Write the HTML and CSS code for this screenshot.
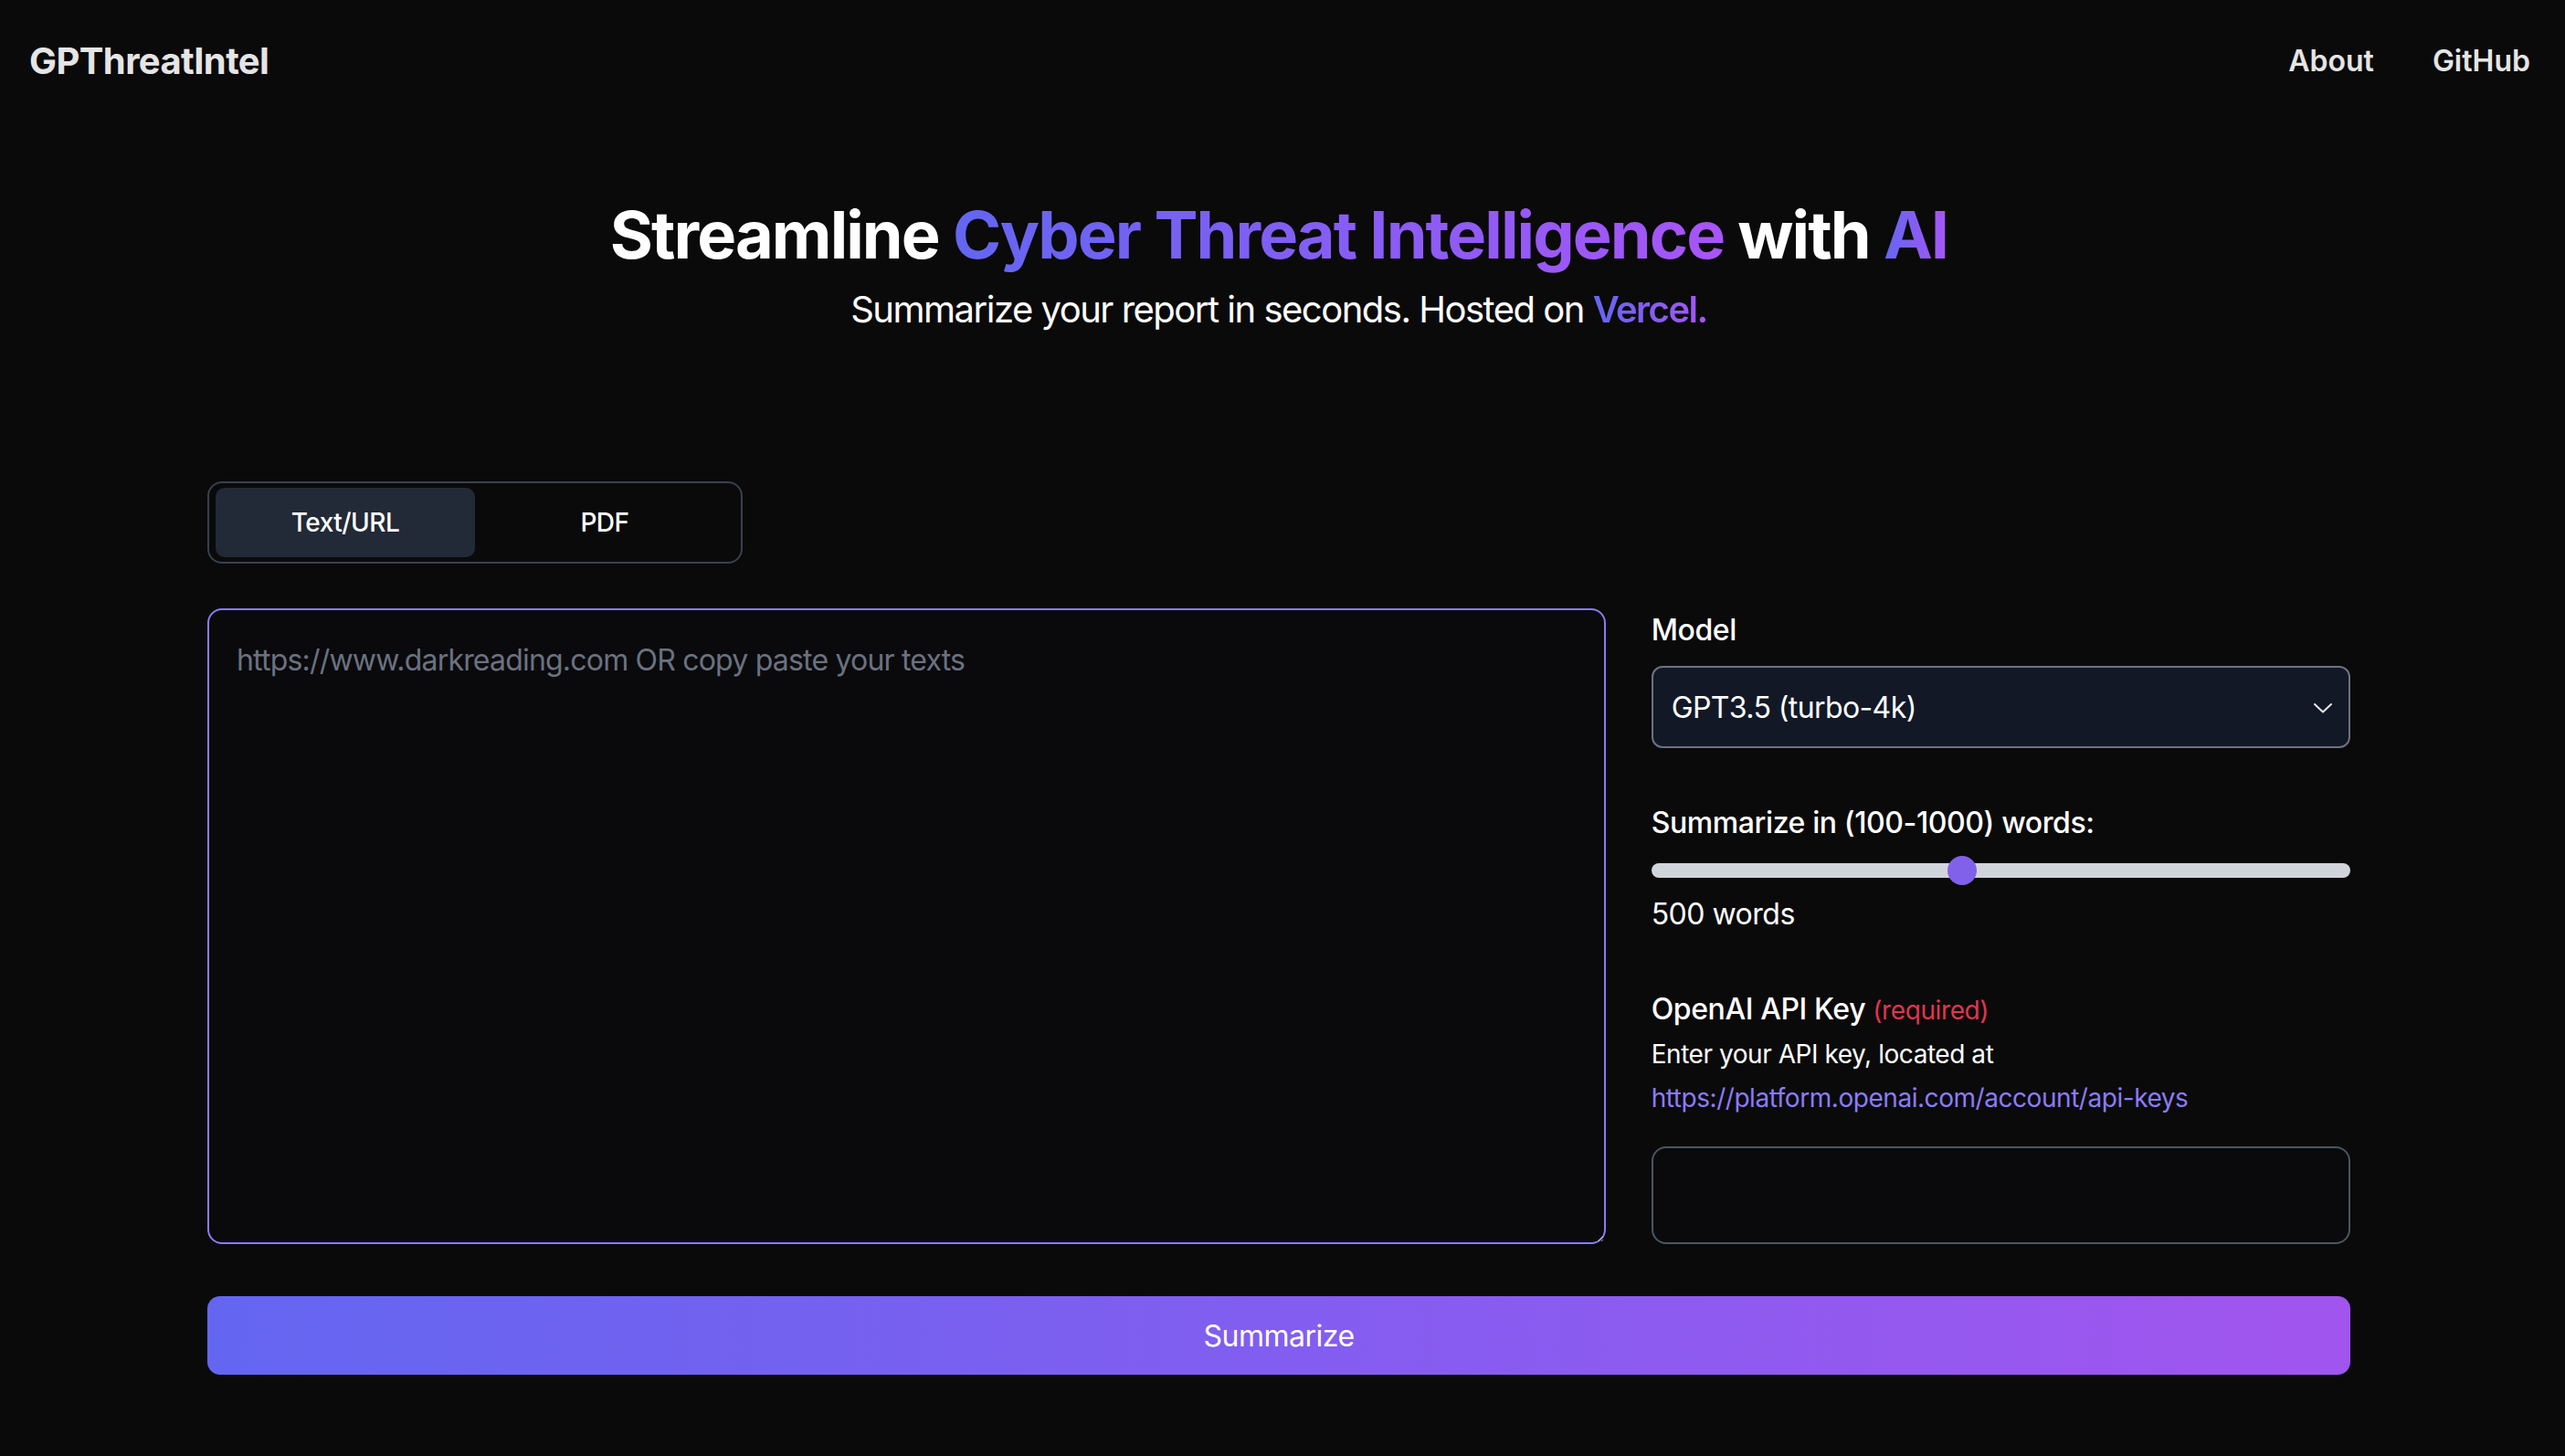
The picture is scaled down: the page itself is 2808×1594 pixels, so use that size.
FILE: index.html
```html
<!DOCTYPE html>
<html lang="en">
<head>
<meta charset="utf-8">
<title>GPThreatIntel</title>
<link rel="stylesheet" href="styles.css">
</head>
<body>
<header class="nav">
  <a class="brand" href="#">GPThreatIntel</a>
  <nav class="links">
    <a href="#">About</a>
    <a href="#">GitHub</a>
  </nav>
</header>
<main class="main">
  <section class="hero">
    <h1 class="title">Streamline <span class="grad">Cyber Threat Intelligence</span> with <span class="grad">AI</span></h1>
    <p class="subtitle">Summarize your report in seconds. Hosted on <span class="grad grad-sub">Vercel.</span></p>
  </section>
  <div class="container">
    <div class="tabs">
      <button class="tab active">Text/URL</button>
      <button class="tab">PDF</button>
    </div>
    <div class="grid">
      <textarea class="report" placeholder="https://www.darkreading.com OR copy paste your texts"></textarea>
      <aside class="side">
        <label class="label">Model</label>
        <div class="select">
          <span>GPT3.5 (turbo-4k)</span>
          <svg class="chev" width="22" height="14" viewBox="0 0 22 14"><path d="M2 3 L11 11.5 L20 3" fill="none" stroke="#e5e7eb" stroke-width="2" stroke-linecap="round" stroke-linejoin="round"/></svg>
        </div>
        <label class="label label-words">Summarize in (100-1000) words:</label>
        <div class="slider">
          <div class="track"></div>
          <div class="thumb" style="left: 44.44%"></div>
        </div>
        <p class="value">500 words</p>
        <label class="label label-key">OpenAI API Key <span class="req">(required)</span></label>
        <p class="hint">Enter your API key, located at</p>
        <a class="hint link" href="#">https://platform.openai.com/account/api-keys</a>
        <input class="key" type="password">
      </aside>
    </div>
    <button class="summarize">Summarize</button>
  </div>
</main>
</body>
</html>
```
FILE: styles.css
```css
* { box-sizing: border-box; }
html, body { margin: 0; padding: 0; }
body {
  background: #0a0a0a;
  color: #ffffff;
  font-family: Inter, "Noto Sans", "Liberation Sans", sans-serif;
  min-height: 1594px;
  padding-right: 8px;
}
a { text-decoration: none; color: inherit; }

.nav {
  height: 132px;
  display: flex;
  align-items: center;
  justify-content: space-between;
  padding: 0 30px 0 32px;
}
.brand {
  font-size: 40px;
  font-weight: 700;
  color: #e5e5e5;
  letter-spacing: -0.6px;
}
.links { display: flex; gap: 64px; }
.links a {
  font-size: 32px;
  font-weight: 600;
  color: #e5e5e5;
  letter-spacing: 0;
}

.hero {
  text-align: center;
  padding-top: 85px;
}
.title {
  margin: 0;
  font-size: 72px;
  line-height: 80px;
  font-weight: 700;
  letter-spacing: -1.9px;
}
.grad {
  background: linear-gradient(90deg, #6366f1, #a855f7);
  -webkit-background-clip: text;
  background-clip: text;
  color: transparent;
}
.subtitle {
  margin: 14px 0 0;
  font-size: 40px;
  line-height: 56px;
  font-weight: 400;
  letter-spacing: -1.5px;
}
.grad-sub { font-weight: 600; }

.container {
  width: 2346px;
  margin: 0 auto;
  padding-top: 160px;
}
.tabs {
  width: 586px;
  height: 90px;
  display: grid;
  grid-template-columns: 1fr 1fr;
  padding: 5px 7px;
  border: 2px solid #374151;
  border-radius: 16px;
}
.tab {
  background: transparent;
  border: none;
  border-radius: 10px;
  color: #ffffff;
  font-family: inherit;
  font-size: 28px;
  font-weight: 500;
  letter-spacing: -0.5px;
}
.tab.active { background: #222a37; }

.grid {
  margin-top: 49px;
  display: grid;
  grid-template-columns: 2fr 1fr;
  gap: 50px;
}
.report {
  width: 100%;
  resize: vertical;
  background: #0a0a0c;
  border: 2px solid #8b7cf6;
  border-radius: 16px;
  padding: 35px 30px;
  font-family: inherit;
  font-size: 32px;
  line-height: 40px;
  letter-spacing: -0.8px;
  color: #ffffff;
  outline: none;
}
.report::placeholder { color: #6b7280; }

.side { display: flex; flex-direction: column; }
.label {
  font-size: 32px;
  line-height: 48px;
  font-weight: 500;
  letter-spacing: -0.4px;
}
.select {
  margin-top: 15px;
  height: 90px;
  display: flex;
  align-items: center;
  justify-content: space-between;
  padding: 0 17px 0 20px;
  background: #121826;
  border: 2px solid #6b7280;
  border-radius: 12px;
  font-size: 32px;
  letter-spacing: -0.6px;
}
.chev { margin-top: 2px; }
.label-words { margin-top: 58px; }
.slider {
  position: relative;
  height: 16px;
  margin-top: 20px;
}
.track {
  height: 16px;
  background: #d1d5db;
  border-radius: 8px;
}
.thumb {
  position: absolute;
  top: -8px;
  width: 32px;
  height: 32px;
  margin-left: -16px;
  border-radius: 50%;
  background: #8161ea;
}
.value {
  margin: 16px 0 0;
  font-size: 32px;
  line-height: 48px;
  letter-spacing: -0.5px;
}
.label-key { margin-top: 56px; }
.req {
  color: #e0364f;
  font-size: 28px;
  font-weight: 400;
}
.hint {
  margin: 0;
  font-size: 28px;
  line-height: 48px;
  letter-spacing: -0.45px;
}
.link {
  margin: 0;
  color: #8b7cf6;
}
.key {
  margin-top: 29px;
  height: 107px;
  width: 100%;
  background: #0a0a0c;
  border: 2px solid #4b5563;
  border-radius: 16px;
  outline: none;
  color: #fff;
  font-size: 32px;
  padding: 0 22px;
}

.summarize {
  margin-top: 57px;
  width: 100%;
  height: 86px;
  border: none;
  border-radius: 14px;
  background: linear-gradient(90deg, #6366f1, #a155ee);
  color: #ffffff;
  font-family: inherit;
  font-size: 32px;
  font-weight: 400;
  letter-spacing: -0.5px;
}
```
